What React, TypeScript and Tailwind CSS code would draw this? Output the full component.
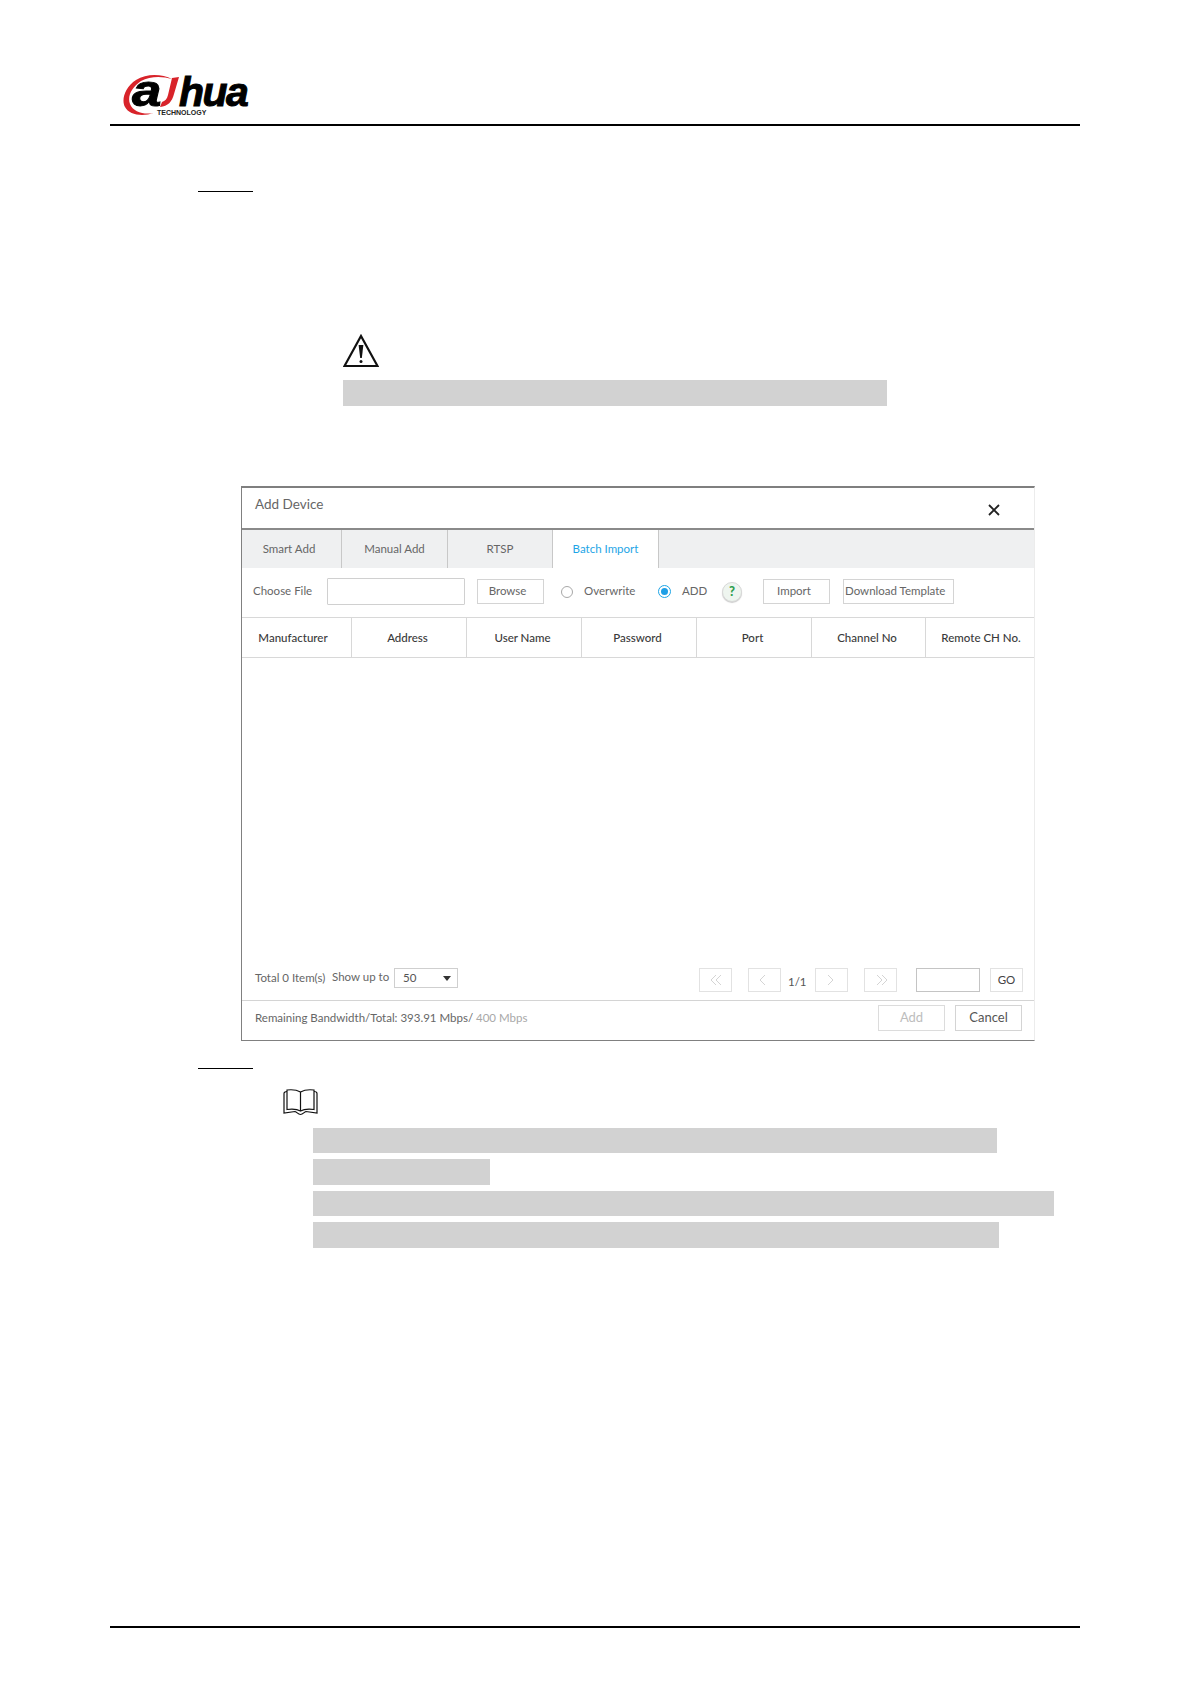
const columns = [
  { label: "Manufacturer", width: "w-[110px] pr-[7px]" },
  { label: "Address", width: "w-[115px] pr-[3px]" },
  { label: "User Name", width: "w-[115px] pr-[3px]" },
  { label: "Password", width: "w-[115px] pr-[3px]" },
  { label: "Port", width: "w-[115px] pr-[3px]" },
  { label: "Channel No", width: "w-[114px] pr-[3px]" },
  { label: "Remote CH No.", width: "w-[108px] pl-[2px]" },
];

function Logo() {
  return (
    <svg width="130" height="54" viewBox="0 -10 130 54" className="ml-[12px] mt-[64px]">
      <path d="M50 5 C40 0 25 -1 14 6 C3 13 -1 26 3 33 C7 41 20 43 32 39 C22 41 11 38 8 30 C5 22 10 13 19 7 C28 2 40 2 50 5 Z" fill="#d8232a" />
      <text transform="translate(10 32) scale(1.2 1)" fontFamily="Liberation Sans, sans-serif" fontWeight="700" fontStyle="italic" fontSize="44" fill="#000" stroke="#000" strokeWidth="1">a</text>
      <path d="M50 4 L57 3 L52 20 C50 28 46 32 38 33 L40 28 C43 27 45 25 46 21 Z" fill="#d8232a" />
      <text x="57" y="32" fontFamily="Liberation Sans, sans-serif" fontWeight="700" fontStyle="italic" fontSize="41" letterSpacing="-1.5" fill="#000" stroke="#000" strokeWidth="1">hua</text>
      <text x="35" y="41" fontFamily="Liberation Sans, sans-serif" fontWeight="700" fontSize="7" fill="#222">TECHNOLOGY</text>
    </svg>
  );
}

function WarningIcon() {
  return (
    <svg width="36" height="34" viewBox="0 0 36 34" className="ml-[233px] mt-[142px]">
      <path d="M18 2 L34.5 32 L1.5 32 Z" fill="none" stroke="#111" strokeWidth="2.2" strokeLinejoin="miter" />
      <path d="M15.6 11 L20.4 11 L18.8 24 L17.2 24 Z" fill="#111" />
      <circle cx="18" cy="27.5" r="1.5" fill="#111" />
    </svg>
  );
}

function BookIcon() {
  return (
    <svg width="36" height="27" viewBox="0 0 36 27" fill="none" stroke="#111" strokeWidth="1.2" className="ml-[173px] mt-[20px]">
      <path d="M17.5 3 C14 1 8 0.5 4 1 L4 20.5 C8 20 14 20 17.5 22 C21 20 27 20 31 20.5 L31 1 C27 0.5 21 1 17.5 3 Z" />
      <path d="M17.5 3 L17.5 22" />
      <path d="M4 2.5 C2.5 2.5 1 3 1 4.5 L1 24 L12 22.5 C14 23 15 25.5 17.5 25.5 C20 25.5 21 23 23 22.5 L34 24 L34 4.5 C34 3 32.5 2.5 31 2.5" />
    </svg>
  );
}

function Chevrons({ dir, double }: { dir: "left" | "right"; double?: boolean }) {
  const d = dir === "left" ? "M10 4 L5 9 L10 14" : "M6 4 L11 9 L6 14";
  const d2 = dir === "left" ? "M15 4 L10 9 L15 14" : "M11 4 L16 9 L11 14";
  return (
    <svg width="20" height="18" viewBox="0 0 20 18" fill="none" stroke="#d4d4d4" strokeWidth="1">
      <path d={d} />
      {double && <path d={d2} />}
    </svg>
  );
}

function PageButton({ children, className }: { children: React.ReactNode; className?: string }) {
  return (
    <div className={`flex h-[24px] w-[33px] items-center justify-center border border-[#e2e2e2] ${className ?? ""}`}>
      {children}
    </div>
  );
}

function ToolButton({ label, className }: { label: string; className: string }) {
  return (
    <div className={`flex h-[25px] items-center border border-[#d4d4d4] pb-[2px] text-[#666] ${className}`}>
      {label}
    </div>
  );
}

function AddDeviceDialog() {
  return (
    <div className="ml-[131px] mt-[80px] flex h-[555px] w-[794px] flex-col border-t-2 border-b border-l border-r border-t-[#7f7f7f] border-b-[#808080] border-l-[#808080] border-r-[#ececec] font-['Lato',sans-serif] text-[11.5px] text-[#666]">
      <div className="relative h-[42px] shrink-0 border-b-2 border-[#8a8a8a] pl-[13px] pt-[6px] text-[13.5px] leading-[20px]">
        Add Device
        <svg width="12" height="12" viewBox="0 0 12 12" className="absolute left-[746px] top-[16px]" stroke="#222" strokeWidth="1.8">
          <path d="M1 1 L11 11 M11 1 L1 11" />
        </svg>
      </div>

      <div className="flex h-[38px] shrink-0 bg-[#eff0f1] leading-[38px]">
        <div className="w-[100px] border-r border-[#c8c8c8] pr-[5px] text-center">Smart Add</div>
        <div className="w-[106px] border-r border-[#c8c8c8] text-center">Manual Add</div>
        <div className="w-[105px] border-r border-[#c8c8c8] text-center">RTSP</div>
        <div className="w-[106px] border-r border-[#c8c8c8] bg-white text-center text-[#1ea5e6]">Batch Import</div>
      </div>

      <div className="flex h-[49px] shrink-0 items-center pb-[2px]">
        <span className="ml-[11px] w-[74px] pb-[2px]">Choose File</span>
        <div className="h-[27px] w-[138px] rounded-[1px] border border-[#d0d0d0]" />
        <ToolButton label="Browse" className="ml-[12px] w-[67px] justify-center pr-[6px]" />
        <div className="ml-[17px] h-[12px] w-[12px] rounded-full border border-[#a8a8a8]" />
        <span className="ml-[11px] w-[70px] pb-[2px]">Overwrite</span>
        <div className="ml-[4px] flex h-[13px] w-[13px] items-center justify-center rounded-full border border-[#1ea5e6]">
          <div className="h-[7px] w-[7px] rounded-full bg-[#1e9fe6]" />
        </div>
        <span className="ml-[11px] w-[26px] pb-[2px]">ADD</span>
        <div className="ml-[14px] flex h-[20px] w-[20px] items-center justify-center rounded-full border border-[#d8d8d8] bg-[#eef5ef] text-[13px] font-black text-[#2f9e4f] shadow-[0_1px_1px_#ccc]">?</div>
        <ToolButton label="Import" className="ml-[21px] w-[67px] justify-center pr-[5px]" />
        <ToolButton label="Download Template" className="ml-[13px] w-[111px] pl-[1px]" />
      </div>

      <div className="flex h-[41px] shrink-0 border-t border-b border-[#d8d8d8] font-medium text-[#3a3a3a]">
        {columns.map((col, i) => (
          <div
            key={col.label}
            className={`flex items-center justify-center ${col.width} ${i < columns.length - 1 ? "border-r border-[#d8d8d8]" : ""}`}
          >
            {col.label}
          </div>
        ))}
      </div>

      <div className="flex-1" />

      <div className="flex h-[33px] shrink-0 items-start pt-[1px]">
        <span className="ml-[13px] mt-[1px] w-[77px]">Total 0 Item(s)</span>
        <span className="w-[62px]">Show up to</span>
        <div className="flex h-[20px] w-[64px] items-center justify-between border border-[#cfcfcf] pl-[8px] pr-[6px] text-[#555]">
          50
          <div className="h-0 w-0 border-x-[4px] border-t-[5px] border-x-transparent border-t-[#333]" />
        </div>
        <PageButton className="ml-[241px]"><Chevrons dir="left" double /></PageButton>
        <PageButton className="ml-[16px]"><Chevrons dir="left" /></PageButton>
        <span className="ml-[7px] mt-[5px] w-[27px] text-[#555]">1/1</span>
        <PageButton><Chevrons dir="right" /></PageButton>
        <PageButton className="ml-[16px]"><Chevrons dir="right" double /></PageButton>
        <div className="ml-[19px] h-[24px] w-[64px] border border-[#c4c4c4]" />
        <PageButton className="ml-[10px] text-[#444]">GO</PageButton>
      </div>

      <div className="flex h-[40px] shrink-0 items-center border-t border-[#d4d4d4] pb-[5px]">
        <span className="ml-[13px] w-[623px]">
          Remaining Bandwidth/Total: 393.91 Mbps/ <span className="text-[#a8a8a8]">400 Mbps</span>
        </span>
        <div className="flex h-[26px] w-[67px] items-center justify-center border border-[#dcdcdc] text-[13px] text-[#bdbdbd]">Add</div>
        <div className="ml-[10px] flex h-[26px] w-[67px] items-center justify-center border border-[#d4d4d4] text-[13px] text-[#555]">Cancel</div>
      </div>
    </div>
  );
}

export default function App() {
  return (
    <div className="flex h-[1684px] w-[1191px] flex-col bg-white pl-[110px] pr-[111px]">
      <div className="h-[126px] shrink-0 border-b-2 border-black">
        <Logo />
      </div>
      <div className="ml-[88px] mt-[65px] h-px w-[55px] shrink-0 bg-black" />
      <WarningIcon />
      <div className="ml-[233px] mt-[12px] h-[26px] w-[544px] shrink-0 bg-[#d2d2d2]" />

      <AddDeviceDialog />

      <div className="ml-[88px] mt-[27px] h-px w-[55px] shrink-0 bg-black" />
      <BookIcon />
      <div className="ml-[203px] mt-[12px] flex flex-col gap-[6px]">
        <div className="h-[25px] w-[684px] bg-[#d2d2d2]" />
        <div className="h-[26px] w-[177px] bg-[#d2d2d2]" />
        <div className="h-[25px] w-[741px] bg-[#d2d2d2]" />
        <div className="h-[26px] w-[686px] bg-[#d2d2d2]" />
      </div>

      <div className="mb-[56px] mt-auto h-[2px] shrink-0 bg-black" />
    </div>
  );
}
